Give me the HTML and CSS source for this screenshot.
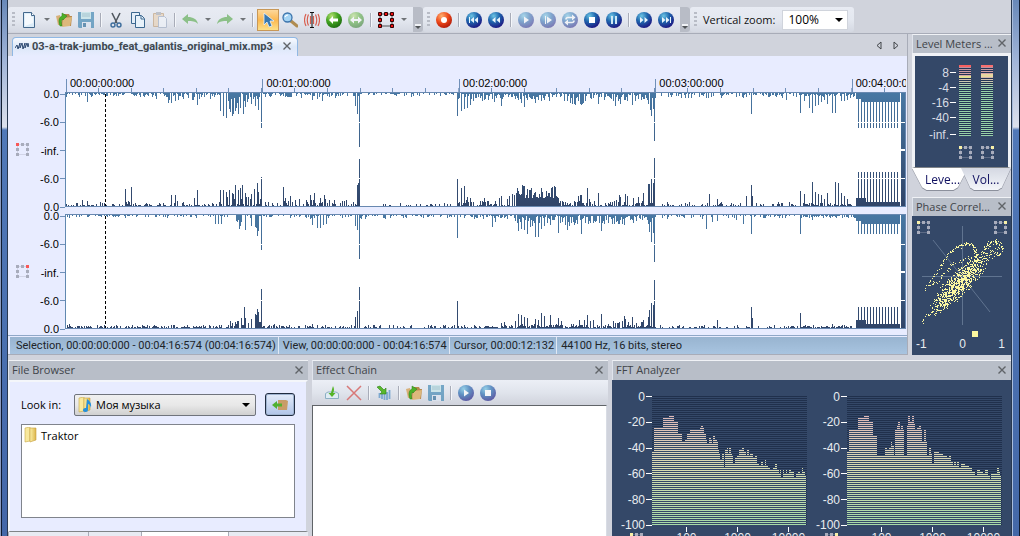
FILE: index.html
```html
<!DOCTYPE html>
<html lang="en">
<head>
    <meta charset="UTF-8">
    <meta name="viewport" content="width=device-width, initial-scale=1.0">
    <title>03-a-trak-jumbo_feat_galantis_original_mix.mp3</title>
    <link rel="stylesheet" href="styles.css">
</head>
<body>
    <svg class="defs" width="0" height="0" aria-hidden="true">
        <defs>
            <radialGradient id="ballBlue" cx="35%" cy="25%" r="80%">
                <stop offset="0" stop-color="#6cc4e4"/>
                <stop offset="0.45" stop-color="#1f68ae"/>
                <stop offset="1" stop-color="#1c1280"/>
            </radialGradient>
            <radialGradient id="ballGreen" cx="35%" cy="25%" r="80%">
                <stop offset="0" stop-color="#b4e070"/>
                <stop offset="0.5" stop-color="#42a321"/>
                <stop offset="1" stop-color="#1c6a10"/>
            </radialGradient>
            <radialGradient id="ballRed" cx="35%" cy="25%" r="80%">
                <stop offset="0" stop-color="#ffb070"/>
                <stop offset="0.5" stop-color="#ee4b1c"/>
                <stop offset="1" stop-color="#b01808"/>
            </radialGradient>
            <linearGradient id="folder" x1="0" x2="1" y1="0" y2="0">
                <stop offset="0" stop-color="#fbf0a8"/>
                <stop offset="1" stop-color="#dcb44a"/>
            </linearGradient>
            <linearGradient id="waveTop" x1="0" x2="0" y1="0" y2="115" gradientUnits="userSpaceOnUse">
                <stop offset="0" stop-color="#4878a4"/>
                <stop offset="1" stop-color="#304468"/>
            </linearGradient>
            <linearGradient id="spectrum" x1="0" x2="0" y1="0" y2="130" gradientUnits="userSpaceOnUse">
                <stop offset="0.1" stop-color="#e0b4b8"/>
                <stop offset="0.35" stop-color="#dcccb8"/>
                <stop offset="0.55" stop-color="#d8dcb0"/>
                <stop offset="1" stop-color="#a8dca8"/>
            </linearGradient>
            <pattern id="rows" width="4" height="2" patternUnits="userSpaceOnUse">
                <rect width="4" height="1" fill="#fff"/>
            </pattern>
            <mask id="rowMask" maskUnits="userSpaceOnUse" x="0" y="0" width="155" height="130">
                <rect width="155" height="130" fill="url(#rows)"/>
            </mask>

            <symbol id="i-new" viewBox="0 0 16 16">
                <path d="M2.500.5h8l3 3v12h-11z" fill="#dcecf8" stroke="#44688c"/>
                <path d="M4 2h6v3h2v6L4 14z" fill="#fff" opacity=".7"/>
                <path d="M10.500.5v3h3" fill="#fff" stroke="#44688c"/>
            </symbol>
            <symbol id="i-open" viewBox="0 0 16 16">
                <path d="M0 4l4-1 1 10H2z" fill="#d8b078"/>
                <path d="M8 2h5l1 2h2l-1 10H4z" fill="#b8884c"/>
                <path d="M7 6l9-1-2 9-8 1z" fill="#dcb87c"/>
                <path d="M4 14C2 9 3 5 6 4V1l5 3-4 4V7c-2 1-2 4-1 7z" fill="#4cb028" stroke="#2c8018" stroke-width=".5"/>
            </symbol>
            <symbol id="i-save" viewBox="0 0 16 16">
                <path d="M0 0h16v16H1l-1-1z" fill="#5090b8"/>
                <path d="M3 0h10v7H3z" fill="#c4e4e8"/>
                <path d="M4 2h8M4 4h8" stroke="#90b8c4"/>
                <path d="M4 10h9v6H4z" fill="#dce4f0"/>
                <path d="M5 11h3v4H5z" fill="#4078a0"/>
            </symbol>
            <symbol id="i-cut" viewBox="0 0 16 16">
                <path d="M4 1l5 10M12 1L7 11" stroke="#505860" stroke-width="1.600" fill="none"/>
                <circle cx="5" cy="13" r="2" fill="none" stroke="#3c6c9c" stroke-width="1.400"/>
                <circle cx="11" cy="13" r="2" fill="none" stroke="#3c6c9c" stroke-width="1.400"/>
            </symbol>
            <symbol id="i-copy" viewBox="0 0 16 16">
                <path d="M1.500.5h8v11h-8z" fill="#e4eef8" stroke="#3c6890"/>
                <path d="M5.500 3.500h6l3 3v9h-9z" fill="#e8f2fa" stroke="#3c6890"/>
                <path d="M11 4v3h3" fill="none" stroke="#3c6890"/>
            </symbol>
            <symbol id="i-paste" viewBox="0 0 16 16">
                <path d="M1.500 1.500h10v13h-10z" fill="#e8d4bc" stroke="#c4a888"/>
                <path d="M4 0h5v3H4z" fill="#b0b4bc"/>
                <path d="M6.500 4.500h6l2 2v9h-8z" fill="#eef2f8" stroke="#a8b4c8"/>
            </symbol>
            <symbol id="i-undo" viewBox="0 0 16 16">
                <path d="M0 7l6-5v3c5 0 9 2 10 7-3-3-6-3-10-3v3z" fill="#8cc088"/>
            </symbol>
            <symbol id="i-redo" viewBox="0 0 16 16">
                <path d="M16 7l-6-5v3C5 5 1 7 0 12c3-3 6-3 10-3v3z" fill="#8cc088"/>
            </symbol>
            <symbol id="i-arrow" viewBox="0 0 16 16">
                <path d="M4 1v12l3-3 2 5 3-1-2-5h4z" fill="#3878b0" stroke="#e8f4fc" stroke-width=".8"/>
            </symbol>
            <symbol id="i-zoom" viewBox="0 0 16 16">
                <path d="M9 9l6 5" stroke="#b08c50" stroke-width="3" stroke-linecap="round"/>
                <circle cx="5.500" cy="5.500" r="4.500" fill="#a4d4f4" stroke="#3c74ac" stroke-width="1.300"/>
                <path d="M3 5q1-2 3-2" stroke="#fff" fill="none" stroke-width="1.200"/>
            </symbol>
            <symbol id="i-scrub" viewBox="0 0 16 16">
                <path d="M2 2Q-1 8 2 14M4.500 2.500Q2 8 4.500 13.500M6.500 4v8M14 2q3 6 0 12M11.500 2.500Q14 8 11.500 13.500M9.500 4v8" stroke="#d86050" fill="none" stroke-width="1.200"/>
                <path d="M6 .5h4M8 1v14M6 15.500h4" stroke="#101010" fill="none"/>
            </symbol>
            <symbol id="i-back" viewBox="0 0 16 16">
                <circle cx="8" cy="8" r="8" fill="url(#ballGreen)"/>
                <path d="M3 8l4-4v2.500h5v3H7V12z" fill="#fff"/>
            </symbol>
            <symbol id="i-both" viewBox="0 0 16 16">
                <circle cx="8" cy="8" r="8" fill="url(#ballGreen)"/>
                <path d="M2 8l4-3.500v2.500h4V4.500L14 8l-4 3.500V9H6v2.500z" fill="#fff"/>
            </symbol>
            <symbol id="i-marquee" viewBox="0 0 16 16">
                <path d="M2 2h12v12H2z" fill="none" stroke="#505050"/>
                <path d="M.5.5h3v3h-3zM6.500.5h3v3h-3zM12.500.5h3v3h-3zM.5 6.500h3v3h-3zM12.500 6.500h3v3h-3zM.5 12.500h3v3h-3zM12.500 12.500h3v3h-3z" fill="#f01010" stroke="#300"/>
            </symbol>
            <symbol id="i-record" viewBox="0 0 16 16">
                <circle cx="8" cy="8" r="8" fill="url(#ballRed)"/>
                <circle cx="8" cy="8" r="3" fill="#fff"/>
            </symbol>
            <symbol id="i-start" viewBox="0 0 16 16">
                <circle cx="8" cy="8" r="8" fill="url(#ballBlue)"/>
                <path d="M3 5h1v6H3zM8 5v6L4.500 8zM12 5v6L8.500 8z" fill="#e8f4fc"/>
            </symbol>
            <symbol id="i-rewind" viewBox="0 0 16 16">
                <circle cx="8" cy="8" r="8" fill="url(#ballBlue)"/>
                <path d="M7.500 5v6L4 8zM12 5v6L8.500 8z" fill="#e8f4fc"/>
            </symbol>
            <symbol id="i-forward" viewBox="0 0 16 16">
                <circle cx="8" cy="8" r="8" fill="url(#ballBlue)"/>
                <path d="M4 5v6l3.500-3zM8.500 5v6L12 8z" fill="#e8f4fc"/>
            </symbol>
            <symbol id="i-end" viewBox="0 0 16 16">
                <circle cx="8" cy="8" r="8" fill="url(#ballBlue)"/>
                <path d="M4 5v6l3.500-3zM8 5v6l3.500-3zM12 5h1v6h-1z" fill="#e8f4fc"/>
            </symbol>
            <symbol id="i-play" viewBox="0 0 16 16">
                <circle cx="8" cy="8" r="8" fill="url(#ballBlue)"/>
                <path d="M6 4.500v7L11 8z" fill="#fff"/>
            </symbol>
            <symbol id="i-playsel" viewBox="0 0 16 16">
                <circle cx="8" cy="8" r="8" fill="url(#ballBlue)"/>
                <path d="M5 4h1v8H5zM7 4.500v7L12 8z" fill="#fff"/>
            </symbol>
            <symbol id="i-loop" viewBox="0 0 16 16">
                <circle cx="8" cy="8" r="8" fill="url(#ballBlue)"/>
                <path d="M4 7.500q0-2 2-2h5M12 8.500q0 2-2 2H5" stroke="#fff" stroke-width="1.600" fill="none"/>
                <path d="M10 2.500l3.500 3-3.500 3zM6 7.500v6l-3.500-3z" fill="#fff"/>
            </symbol>
            <symbol id="i-stop" viewBox="0 0 16 16">
                <circle cx="8" cy="8" r="8" fill="url(#ballBlue)"/>
                <path d="M5 5h6v6H5z" fill="#fff"/>
            </symbol>
            <symbol id="i-pause" viewBox="0 0 16 16">
                <circle cx="8" cy="8" r="8" fill="url(#ballBlue)"/>
                <path d="M5 4h2v8H5zM9 4h2v8H9z" fill="#cfe8f4"/>
            </symbol>
            <symbol id="i-close" viewBox="0 0 8 8">
                <path d="M.5.5l7 7M7.500.5l-7 7" stroke="#606468" stroke-width="1.400"/>
            </symbol>
            <symbol id="i-wave" viewBox="0 0 14 8">
                <path d="M0 6l2-3 1 4 2-6v5l2-5 1 6 2-6v5l2-5 1 4 1-4" fill="none" stroke="#2c4870"/>
            </symbol>
            <symbol id="i-import" viewBox="0 0 16 16">
                <path d="M1.500 8.500L4 7h8l2.500 1.500v5h-13z" fill="#e0ecf4" stroke="#8cb0c4"/>
                <path d="M9 1q2 4 0 7h2.500L8 12 4.500 8H7q1-4 2-7z" fill="#54b428"/>
            </symbol>
            <symbol id="i-delete" viewBox="0 0 16 16">
                <path d="M1 1l14 14M15 1L1 15" stroke="#d87878" stroke-width="1.500"/>
            </symbol>
            <symbol id="i-apply" viewBox="0 0 16 16">
                <path d="M3.500 8v5M6 9v5M8.500 8v7M11 7v8M13.500 5v9" stroke="#7ca8d0" stroke-width="1.800"/>
                <path d="M1 2l3-1 4 4 2-2v6H4l2-2z" fill="#58b82c" stroke="#2c8018" stroke-width=".6"/>
            </symbol>
            <symbol id="i-folder" viewBox="0 0 14 16">
                <path d="M1 1l5-1v14l-5 1z" fill="#f8e89c" stroke="#c8a848" stroke-width=".6"/>
                <path d="M6 1h6v12l-6 2z" fill="url(#folder)" stroke="#c8a040" stroke-width=".6"/>
            </symbol>
            <symbol id="i-note" viewBox="0 0 14 16">
                <path d="M9 2q5 3 4 9-1-4-3-4v6a2.500 2 0 1 1-2-2z" fill="#2490dc"/>
            </symbol>
            <symbol id="i-up" viewBox="0 0 16 12">
                <path d="M6 1h8l2 1-1 9H6z" fill="#c89c68"/>
                <path d="M0 6l5-4v2.500h5v3H5V10z" fill="#50b030"/>
            </symbol>
            <symbol id="i-speakers" viewBox="0 0 13 13">
                <path d="M1.500 1.500h10v10h-10z" fill="none" stroke="currentColor" opacity=".35"/>
                <path d="M0 0h3v3H0zM5 0h3v3H5zM10 0h3v3h-3zM0 5h3v3H0zM10 5h3v3h-3zM0 10h3v3H0zM10 10h3v3h-3z" fill="currentColor"/>
            </symbol>
        </defs>
    </svg>

    <div class="frame"></div>
    <div class="app">
        <div class="menu-strip"></div>

        <div class="toolbars">
            <div class="toolbar">
                <span class="grip"></span>
                <button class="tool" aria-label="New"><svg><use href="#i-new"/></svg></button>
                <button class="caret" aria-label="New options"></button>
                <button class="tool" aria-label="Open"><svg><use href="#i-open"/></svg></button>
                <button class="tool faded" aria-label="Save"><svg><use href="#i-save"/></svg></button>
                <span class="sep"></span>
                <button class="tool" aria-label="Cut"><svg><use href="#i-cut"/></svg></button>
                <button class="tool" aria-label="Copy"><svg><use href="#i-copy"/></svg></button>
                <button class="tool faded" aria-label="Paste"><svg><use href="#i-paste"/></svg></button>
                <span class="sep"></span>
                <button class="tool" aria-label="Undo"><svg><use href="#i-undo"/></svg></button>
                <button class="caret" aria-label="Undo history"></button>
                <button class="tool" aria-label="Redo"><svg><use href="#i-redo"/></svg></button>
                <button class="caret" aria-label="Redo history"></button>
                <span class="sep"></span>
                <button class="tool active" aria-label="Select"><svg><use href="#i-arrow"/></svg></button>
                <button class="tool" aria-label="Zoom"><svg><use href="#i-zoom"/></svg></button>
                <button class="tool" aria-label="Scrub"><svg><use href="#i-scrub"/></svg></button>
                <button class="tool" aria-label="Back"><svg><use href="#i-back"/></svg></button>
                <button class="tool dim" aria-label="Expand"><svg><use href="#i-both"/></svg></button>
                <span class="sep"></span>
                <button class="tool" aria-label="Channels"><svg><use href="#i-marquee"/></svg></button>
                <button class="caret" aria-label="Channel options"></button>
                <button class="more" aria-label="More tools"></button>
            </div>
            <div class="toolbar">
                <span class="grip"></span>
                <button class="tool" aria-label="Record"><svg><use href="#i-record"/></svg></button>
                <span class="sep"></span>
                <button class="tool" aria-label="To start"><svg><use href="#i-start"/></svg></button>
                <button class="tool" aria-label="Rewind"><svg><use href="#i-rewind"/></svg></button>
                <span class="sep"></span>
                <button class="tool dim" aria-label="Play"><svg><use href="#i-play"/></svg></button>
                <button class="tool dim" aria-label="Play selection"><svg><use href="#i-playsel"/></svg></button>
                <button class="tool dim" aria-label="Loop"><svg><use href="#i-loop"/></svg></button>
                <button class="tool" aria-label="Stop"><svg><use href="#i-stop"/></svg></button>
                <button class="tool" aria-label="Pause"><svg><use href="#i-pause"/></svg></button>
                <span class="sep"></span>
                <button class="tool" aria-label="Forward"><svg><use href="#i-forward"/></svg></button>
                <button class="tool" aria-label="To end"><svg><use href="#i-end"/></svg></button>
                <button class="more" aria-label="More playback"></button>
            </div>
            <div class="toolbar zoom-bar">
                <span class="grip"></span>
                <label for="vzoom">Vertical zoom:</label>
                <div class="select-wrap">
                    <select id="vzoom"><option>100%</option></select>
                </div>
            </div>
        </div>

        <div class="work">
            <main class="document">
                <div class="tab-strip">
                    <div class="doc-tab">
                        <svg class="wave-icon"><use href="#i-wave"/></svg>
                        <span>03-a-trak-jumbo_feat_galantis_original_mix.mp3</span>
                        <button class="close" aria-label="Close file"><svg><use href="#i-close"/></svg></button>
                    </div>
                    <div class="tab-nav">
                        <button aria-label="Previous tab"><svg viewBox="0 0 6 9"><path d="M5 1v7L1 4.500z"/></svg></button>
                        <button aria-label="Next tab"><svg viewBox="0 0 6 9"><path d="M1 1v7l4-3.500z"/></svg></button>
                    </div>
                </div>
                <div class="editor">
                    <div class="ruler" id="ruler"></div>
                    <div class="channel">
                        <svg class="speakers"><use href="#i-speakers"/><rect class="hot" width="3" height="3"/></svg>
                        <div class="scale"><span>0.0</span><span>-6.0</span><span>-inf.</span><span>-6.0</span><span>0.0</span></div>
                        <svg class="wave" id="wave1" viewBox="66 0 840 115" preserveAspectRatio="none"></svg>
                    </div>
                    <div class="channel">
                        <svg class="speakers"><use href="#i-speakers"/><rect class="hot" x="10" width="3" height="3"/></svg>
                        <div class="scale"><span>0.0</span><span>-6.0</span><span>-inf.</span><span>-6.0</span><span>0.0</span></div>
                        <svg class="wave" id="wave2" viewBox="66 0 840 115" preserveAspectRatio="none"></svg>
                    </div>
                </div>
                <div class="status">
                    <span>Selection, 00:00:00:000 - 00:04:16:574 (00:04:16:574)</span>
                    <span>View, 00:00:00:000 - 00:04:16:574</span>
                    <span>Cursor, 00:00:12:132</span>
                    <span>44100 Hz, 16 bits, stereo</span>
                </div>
            </main>

            <aside class="side">
                <section class="panel">
                    <h2><span>Level Meters ...</span><button class="close" aria-label="Close"><svg><use href="#i-close"/></svg></button></h2>
                    <div class="meters">
                        <div class="db"><span>8</span><span>-4</span><span>-16</span><span>-40</span><span>-inf.</span></div>
                        <div class="meter"><div class="bar left"></div><svg class="speakers"><use href="#i-speakers"/><rect class="lit" width="3" height="3"/></svg></div>
                        <div class="meter"><div class="bar right"></div><svg class="speakers"><use href="#i-speakers"/><rect class="lit" x="10" width="3" height="3"/></svg></div>
                    </div>
                    <div class="meter-tabs">
                        <button class="on">Leve...</button>
                        <button>Vol...</button>
                    </div>
                </section>
                <section class="panel">
                    <h2><span>Phase Correl...</span><button class="close" aria-label="Close"><svg><use href="#i-close"/></svg></button></h2>
                    <div class="phase">
                        <svg id="phase" viewBox="912 216 99 115">
                            <path class="axis" d="M962.500 226v99M922 276.500h80M933 240l57 72"/>
                            <svg class="speakers" x="917" y="221" width="13" height="13"><use href="#i-speakers"/><rect class="lit" width="3" height="3"/></svg>
                            <svg class="speakers" x="994" y="221" width="13" height="13"><use href="#i-speakers"/><rect class="lit" x="10" width="3" height="3"/></svg>
                        </svg>
                        <div class="phase-mark"></div>
                        <div class="phase-scale"><span>-1</span><span>0</span><span>1</span></div>
                    </div>
                </section>
            </aside>
        </div>

        <div class="dock">
            <section class="panel browser">
                <h2><span>File Browser</span><button class="close" aria-label="Close"><svg><use href="#i-close"/></svg></button></h2>
                <div class="browser-body">
                    <div class="look-in">
                        <label for="lookin">Look in:</label>
                        <div class="folder-select">
                            <svg><use href="#i-folder"/><use href="#i-note"/></svg>
                            <select id="lookin"><option>Моя музыка</option></select>
                        </div>
                        <button class="up" aria-label="Up one level"><svg><use href="#i-up"/></svg></button>
                    </div>
                    <ul class="files">
                        <li><svg><use href="#i-folder"/></svg>Traktor</li>
                    </ul>
                </div>
                <div class="dock-tabs"><span></span><span></span><span class="on"></span><span></span></div>
            </section>
            <section class="panel effects">
                <h2><span>Effect Chain</span><button class="close" aria-label="Close"><svg><use href="#i-close"/></svg></button></h2>
                <div class="effect-tools">
                    <button class="tool" aria-label="Add effect"><svg><use href="#i-import"/></svg></button>
                    <button class="tool" aria-label="Remove effect"><svg><use href="#i-delete"/></svg></button>
                    <span class="sep"></span>
                    <button class="tool" aria-label="Apply"><svg><use href="#i-apply"/></svg></button>
                    <span class="sep"></span>
                    <button class="tool" aria-label="Open chain"><svg><use href="#i-open"/></svg></button>
                    <button class="tool faded" aria-label="Save chain"><svg><use href="#i-save"/></svg></button>
                    <span class="sep"></span>
                    <button class="tool dim" aria-label="Preview"><svg><use href="#i-play"/></svg></button>
                    <button class="tool dim" aria-label="Stop preview"><svg><use href="#i-stop"/></svg></button>
                </div>
                <div class="effect-list"></div>
            </section>
            <section class="panel fft">
                <h2><span>FFT Analyzer</span><button class="close" aria-label="Close"><svg><use href="#i-close"/></svg></button></h2>
                <div class="graphs">
                    <div class="graph">
                        <div class="fft-db"><span>0</span><span>-20</span><span>-40</span><span>-60</span><span>-80</span><span>-100</span></div>
                        <svg class="plot" id="fft1" viewBox="0 0 155 130" preserveAspectRatio="none"></svg>
                        <svg class="speakers"><use href="#i-speakers"/><rect class="lit" width="3" height="3"/></svg>
                        <div class="hz"><span>100</span><span>1000</span><span>10000</span></div>
                    </div>
                    <div class="graph">
                        <div class="fft-db"><span>0</span><span>-20</span><span>-40</span><span>-60</span><span>-80</span><span>-100</span></div>
                        <svg class="plot" id="fft2" viewBox="0 0 155 130" preserveAspectRatio="none"></svg>
                        <svg class="speakers"><use href="#i-speakers"/><rect class="lit" x="10" width="3" height="3"/></svg>
                        <div class="hz"><span>100</span><span>1000</span><span>10000</span></div>
                    </div>
                </div>
            </section>
        </div>
    </div>
    <div class="frame right"></div>
    <script src="script.js"></script>
</body>
</html>
```
FILE: styles.css
```css
* {
    box-sizing: border-box;
}
body {
    margin: 0;
    display: flex;
    height: 100vh;
    overflow: hidden;
    background: #d0d3dc;
    font-family: "Open Sans", "Noto Sans", sans-serif;
    font-size: 11px;
    color: #202428;
}
button {
    margin: 0;
    padding: 0;
    border: none;
    background: none;
    font: inherit;
    color: inherit;
}
select {
    appearance: none;
    border: none;
    background: none;
    margin: 0;
    font: inherit;
    color: #000;
}
.defs {
    position: absolute;
}

/* Window frame */
.frame {
    flex: 0 0 8px;
    border-left: 1px solid #8c9cc0;
    border-right: 1px solid #283850;
    background: linear-gradient(#6888b8 0, #a0b4d8 60px, #dce0ec 127px, #5078b8 130px, #4468a8 100%);
    box-shadow: inset 1px 0 #101c30;
}
.frame.right {
    flex-basis: 9px;
    border-left: 1px solid #283850;
    border-right: 1px solid #101c30;
    box-shadow: inset 1px 0 #a8bcdc;
}
.app {
    flex: 1;
    min-width: 0;
    display: flex;
    flex-direction: column;
}
.menu-strip {
    flex: 0 0 7px;
}

/* Toolbars */
.toolbars {
    display: flex;
    flex: 0 0 27px;
    padding-bottom: 1px;
    border-bottom: 1px solid #a8acb8;
}
.toolbar {
    display: flex;
    align-items: center;
    height: 25px;
    padding-left: 4px;
    border-radius: 3px;
    background: linear-gradient(#e8ebf3, #e4e8f0 50%, #d4d8e2);
}
.grip {
    width: 3px;
    height: 15px;
    margin-right: 3px;
    background: repeating-linear-gradient(#b8bcc6 0, #b8bcc6 2px, transparent 2px, transparent 4px);
}
.tool {
    display: flex;
    align-items: center;
    justify-content: center;
    width: 22px;
    height: 22px;
    flex: none;
}
.tool svg {
    width: 16px;
    height: 16px;
}
.tool.active {
    border: 1px solid #c89858;
    background: linear-gradient(#fcd89c, #fcb850 50%, #fce088);
}
.faded svg {
    opacity: .75;
}
.dim svg {
    opacity: .5;
}
.effect-tools .dim svg {
    opacity: .65;
}
.caret {
    width: 13px;
    height: 22px;
    display: flex;
    align-items: center;
    justify-content: center;
}
.caret::before {
    content: "";
    border: 3px solid transparent;
    border-top-color: #707478;
    border-bottom: none;
}
.sep {
    flex: none;
    width: 2px;
    height: 14px;
    margin: 0 3px;
    background: linear-gradient(to right, #a8acb8 1px, #f4f6fa 1px);
}
.more {
    display: flex;
    align-items: flex-end;
    justify-content: center;
    width: 10px;
    height: 25px;
    margin-left: 3px;
    padding-bottom: 3px;
    border-radius: 0 3px 3px 0;
    background: #b8bcc6;
}
.more::before {
    content: "";
    border: 3px solid transparent;
    border-top-color: #505458;
    border-bottom: none;
    box-shadow: 0 -2px #f0f2f6;
}
.zoom-bar {
    padding-right: 6px;
}
.zoom-bar label {
    margin-left: 3px;
    margin-right: 7px;
    color: #101010;
}
.select-wrap {
    position: relative;
}
.select-wrap select {
    display: block;
    width: 66px;
    height: 20px;
    padding: 0 5px;
    border: 1px solid #d0d4dc;
    background: #fff;
    font-size: 12px;
}
.select-wrap::after,
.folder-select::after {
    content: "";
    position: absolute;
    right: 5px;
    top: 8px;
    border: 4px solid transparent;
    border-top-color: #000;
    border-bottom: none;
}

/* Document */
.work {
    display: flex;
    flex: none;
    gap: 4px;
}
.document {
    flex: 1;
    min-width: 0;
    border-right: 1px solid #a8acb8;
    border-bottom: 1px solid #a8acb8;
    background: #e8ecff;
}
.tab-strip {
    display: flex;
    justify-content: space-between;
    align-items: flex-end;
    height: 22px;
    padding: 0 8px 0 4px;
    background: #d0d3dc;
}
.doc-tab {
    display: flex;
    align-items: center;
    height: 19px;
    padding: 0 6px 2px 2px;
    border: 1px solid #90b8e4;
    border-bottom: none;
    border-radius: 4px 4px 0 0;
    background: linear-gradient(#f8faff, #dce8f8 50%, #e8ecff);
    font-family: Roboto, "Open Sans", sans-serif;
    font-weight: bold;
    color: #404850;
}
.wave-icon {
    width: 14px;
    height: 8px;
    margin-right: 3px;
}
.close {
    display: flex;
    align-items: center;
}
.close svg {
    width: 8px;
    height: 8px;
}
.doc-tab .close {
    margin-left: 10px;
}
.tab-nav {
    display: flex;
    gap: 11px;
    align-self: center;
}
.tab-nav svg {
    display: block;
    width: 6px;
    height: 9px;
    fill: none;
    stroke: #404448;
}
.editor {
    padding: 0 1px 6px 0;
    border-bottom: 1px solid #90a8c8;
    font-family: "Liberation Sans", Arial, sans-serif;
    color: #000;
}
.ruler {
    display: flex;
    height: 36px;
    margin-left: 58px;
    overflow: hidden;
    align-items: flex-end;
}
.minute {
    flex: none;
    height: 13px;
    padding-left: 3px;
    line-height: 8px;
    border-left: 1px solid #7090b8;
    background: repeating-linear-gradient(to right, transparent 0, transparent calc(100% / 6 - 1px), #7090b8 calc(100% / 6 - 1px), #7090b8 calc(100% / 6)) bottom / 100% 4px no-repeat;
}
.channel {
    display: flex;
    align-items: center;
}
.channel + .channel {
    margin-top: 7px;
}
.speakers {
    flex: none;
    width: 13px;
    height: 13px;
    color: #a8acbc;
}
.hot {
    fill: #f85858;
}
.lit {
    fill: #f8f0a8;
}
.channel .speakers {
    margin: 0 0 0 8px;
}
.scale {
    display: flex;
    flex-direction: column;
    justify-content: space-between;
    width: 36px;
    height: 121px;
    margin: -2px 0 -4px;
}
.scale span {
    display: flex;
    justify-content: flex-end;
    align-items: center;
    line-height: 8px;
}
.scale span::after {
    content: "";
    width: 5px;
    height: 1px;
    margin-left: 1px;
    background: #7090b8;
}
.wave {
    flex: 1;
    min-width: 0;
    height: 115px;
    border-left: 1px solid #6088b0;
    background: #fff;
}
.wave .cursor {
    stroke: #000;
    stroke-dasharray: 3 2;
}
.wave .grid {
    stroke: #fff;
}
.wave .edge {
    stroke: #6888b0;
}
.status {
    display: flex;
    height: 17px;
    margin: 1px 0 0 2px;
    line-height: 17px;
    background: linear-gradient(#98b4d0, #a8c4e0);
    font-family: Roboto, "Open Sans", sans-serif;
}
.status span {
    padding: 0 2px 0 4px;
    border-right: 1px solid #e0e8f4;
    white-space: nowrap;
}
.status span:first-child {
    padding-left: 6px;
}
.status span:last-child {
    border: none;
}

/* Panels */
.side {
    flex: 0 0 99px;
    display: flex;
    flex-direction: column;
    justify-content: space-between;
}
.panel {
    min-width: 0;
}
.panel h2 {
    display: flex;
    justify-content: space-between;
    align-items: center;
    height: 19px;
    margin: 0;
    padding: 0 5px 2px 3px;
    border-top: 1px solid #f0f2f6;
    border-left: 1px solid #e0e4ec;
    background: #b8bec8;
    font-size: 11px;
    font-weight: normal;
    color: #404448;
    white-space: nowrap;
}
.meters {
    display: flex;
    height: 115px;
    padding: 9px 14px 0 6px;
    border: 3px solid #f0f2f6;
    border-bottom: 1px solid #808488;
    background: #344868;
    font-family: "Liberation Sans", Arial, sans-serif;
    font-size: 12px;
    color: #d8dce4;
}
.db {
    flex: 1;
    margin-right: 3px;
}
.db span,
.fft-db span {
    display: flex;
    align-items: center;
    justify-content: flex-end;
    height: 15px;
}
.db span:last-child {
    margin-top: 2px;
}
.db span::after,
.fft-db span::after {
    content: "";
    width: 6px;
    height: 1px;
    margin-left: 1px;
    background: #fff;
}
.meter {
    width: 13px;
}
.meter + .meter {
    margin-left: 9px;
}
.bar {
    width: 12px;
    height: 71px;
    margin-bottom: 10px;
    background:
        linear-gradient(#f86060 0, #f86060 2px, transparent 2px, transparent 11px, #e0e090 11px, #e0e090 13px, transparent 13px),
        repeating-linear-gradient(transparent 0, transparent 1px, #243454 1px, #243454 2px),
        linear-gradient(#b88898, #d8a8a8 11px, #d0c8b0 16px, #98d0a8 22px, #98d0a8);
}
.bar.right {
    background:
        linear-gradient(#f87070 0, #f87070 2px, transparent 2px, transparent 9px, #e8d8a0 9px, #e8d8a0 12px, transparent 12px),
        repeating-linear-gradient(transparent 0, transparent 1px, #243454 1px, #243454 2px),
        linear-gradient(#b88898, #d8a8a8 9px, #d0c8b0 16px, #98d0a8 22px, #98d0a8);
}
.meter-tabs {
    display: flex;
    height: 23px;
    font-size: 12px;
    color: #101060;
    filter: drop-shadow(0 1px 0 #8c909c);
}
.meter-tabs button {
    width: 50px;
    margin-bottom: 1px;
    background: linear-gradient(#d4d8e2, #f4f6fa);
    clip-path: polygon(0 0, 100% 0, 82% 88%, 74% 100%, 26% 100%, 18% 88%);
}
.meter-tabs .on {
    width: 56px;
    padding-left: 5px;
    margin-right: -7px;
    background: #fff;
}
.phase {
    height: 139px;
    background: #344868;
    font-family: "Liberation Sans", Arial, sans-serif;
    font-size: 12px;
    color: #e8ecf0;
}
.phase > svg {
    display: block;
    width: 100%;
    height: 115px;
}
.axis {
    fill: none;
    stroke: #607490;
}
.dots {
    fill: #fcf8a0;
}
.phase-mark {
    width: 6px;
    height: 6px;
    margin-left: 60px;
    background: #fcf8a0;
}
.phase-scale {
    display: flex;
    justify-content: space-between;
    padding: 0 6px 0 4px;
    line-height: 14px;
}

/* Bottom dock */
.dock {
    flex: 1;
    min-height: 0;
    display: grid;
    grid-template-columns: 300fr 296fr 399fr;
    gap: 4px;
    margin-top: 5px;
}
.dock .panel {
    display: flex;
    flex-direction: column;
    min-height: 0;
    overflow: hidden;
}
.dock .panel h2 {
    flex: none;
    height: 20px;
}
.browser-body {
    flex: none;
    height: 152px;
    padding: 11px;
    border: 2px solid #f4f6fa;
    border-bottom: 1px solid #808488;
    border-right-color: #d0d4dc;
    background: #e8ecff;
    color: #000;
}
.look-in {
    display: flex;
    align-items: center;
    margin-bottom: 8px;
}
.look-in label {
    width: 53px;
}
.folder-select {
    position: relative;
    flex: 1;
    display: flex;
    align-items: center;
    height: 22px;
    padding-left: 3px;
    border: 1px solid #70747c;
    border-radius: 2px;
    background: linear-gradient(#f0f0f0, #e8e8e8 50%, #d0d0d0);
}
.folder-select svg {
    flex: none;
    width: 14px;
    height: 16px;
    margin-right: 4px;
}
.folder-select select {
    flex: 1;
    min-width: 0;
    padding: 0;
}
.up {
    display: flex;
    align-items: center;
    justify-content: center;
    width: 30px;
    height: 23px;
    margin-left: 9px;
    border: 1px solid #202c40;
    border-radius: 3px;
    background: linear-gradient(#e4ecfa, #b0c4e8);
    box-shadow: inset 0 0 0 1px #a0b4d0;
}
.up svg {
    width: 16px;
    height: 12px;
}
.files {
    height: 94px;
    margin: 0;
    padding: 1px 2px;
    border: 1px solid #80848c;
    background: #fff;
    list-style: none;
}
.files li {
    display: flex;
    align-items: center;
    height: 18px;
}
.files svg {
    width: 14px;
    height: 16px;
    margin-right: 3px;
}
.dock-tabs {
    display: flex;
    flex: 1;
    background: #d8dce4;
}
.dock-tabs span {
    flex: 80;
    border-left: 1px solid #a8acb8;
    background: #e8ebf3;
}
.dock-tabs span:nth-child(2) {
    flex: 52;
}
.dock-tabs .on {
    flex: 86;
    background: #fff;
}
.effect-tools {
    display: flex;
    flex: none;
    align-items: center;
    height: 25px;
    padding-left: 9px;
    background: linear-gradient(#eceff6, #e0e4ec 50%, #d0d3dc);
}
.effect-list {
    flex: 1;
    margin-right: 1px;
    border: 1px solid #606468;
    border-right-color: #d8dce4;
    border-bottom: none;
    background: #fff;
}
.fft {
    background: #344868;
}
.graphs {
    display: grid;
    grid-template-columns: minmax(0, 1fr) minmax(0, 1fr);
    gap: 6px;
    padding: 9px 9px 0 6px;
    font-family: "Liberation Sans", Arial, sans-serif;
    font-size: 12px;
    color: #e8ecf0;
}
.graph {
    display: grid;
    grid-template-columns: 34px minmax(0, 1fr);
}
.fft-db {
    display: flex;
    flex-direction: column;
    justify-content: space-between;
    height: 144px;
}
.plot {
    width: 100%;
    height: 130px;
    margin-top: 7px;
    background: repeating-linear-gradient(#20304c 0, #20304c 1px, #344868 1px, #344868 2px);
}
.graph .speakers {
    justify-self: end;
    margin: 0 9px 0 0;
}
.hz {
    display: flex;
    margin: -6px 0 0 9px;
}
.hz span {
    display: flex;
    flex: 0 0 51px;
    flex-direction: column;
    align-items: center;
    line-height: 12px;
}
.hz span::before {
    content: "";
    width: 1px;
    height: 5px;
    background: #fff;
}
```
FILE: script.js
```js
const NS = 'http://www.w3.org/2000/svg';
const DURATION = 256.574;

function make(parent, name, attrs) {
    const el = document.createElementNS(NS, name);
    for (const key in attrs) {
        el.setAttribute(key, attrs[key]);
    }
    parent.appendChild(el);
    return el;
}

// "x:h x:h" -> [[x, h], ...]
function parse(text) {
    return text.trim().split(/\s+/).map(pair => pair.split(':').map(Number));
}

let seed = 7;
function random() {
    seed = (seed * 16807) % 2147483647;
    return seed / 2147483647;
}

// Time ruler, one cell per minute
const ruler = document.getElementById('ruler');
for (let m = 0; m < 5; m++) {
    const cell = document.createElement('span');
    cell.className = 'minute';
    cell.textContent = '00:0' + m + ':00:000';
    cell.style.width = (60 / DURATION * 100) + '%';
    ruler.appendChild(cell);
}

// noise: [from, to, density, max height]
const channels = [
    {
        id: 'wave1',
        top: '87:10 156:7 168:11 171:11 175:9 178:8 183:7 188:6 193:8 197:13 220:19 223:24 226:26 229:17 230:20 232:24 233:22 235:19 236:16 238:22 240:16 243:22 245:15 251:12 255:14 258:18 261:36 312:8 317:7 322:9 355:14 357:22 359:55 457:24 461:19 464:17 467:16 470:13 473:9 476:6 482:9 484:8 488:8 492:7 494:10 496:6 501:14 508:5 512:5 515:7 518:8 521:11 524:15 527:8 530:6 535:11 538:8 541:9 544:8 548:5 564:9 570:11 572:12 574:12 575:13 578:9 580:12 581:13 582:12 583:11 585:9 598:12 605:5 615:14 618:9 620:12 624:8 627:9 632:13 635:9 643:7 648:12 650:18 651:24 653:17 654:49 706:6 708:6 711:5 736:5 743:5 746:5 751:22 770:4 776:5 786:8 800:21 804:9 809:16 812:21 815:14 818:13 821:10 824:8 827:12 832:21 835:21 841:9 844:9 847:8 850:6',
        bottom: '76:4 82:7 87:6 125:18 128:6 131:20 146:4 171:12 175:12 177:6 183:5 194:9 197:17 220:17 223:17 226:15 229:17 232:14 233:13 235:22 238:17 240:19 242:22 245:14 251:13 254:18 257:24 258:15 261:30 283:20 285:9 290:11 310:12 314:14 320:9 324:12 329:7 357:22 358:24 359:48 457:28 461:19 464:21 467:10 470:9 484:9 487:6 499:9 501:11 507:8 509:11 512:13 514:12 578:11 580:12 581:12 587:19 589:8 598:14 619:12 620:10 625:13 627:11 633:9 638:10 643:14 648:23 649:23 651:28 653:24 654:49 709:13 717:8 746:11 751:22 752:11 800:16 804:13 812:25 815:15 818:13 821:12 824:8 827:14 835:25 838:24 841:14 844:11 847:8',
        topNoise: [[66, 165, .6, 3], [165, 220, .7, 6], [226, 248, .9, 12], [248, 262, .7, 6], [262, 340, .7, 4], [340, 457, .5, 3], [457, 548, .9, 6], [548, 655, .85, 7], [655, 800, .5, 4], [800, 860, .9, 3]],
        bottomNoise: [[66, 220, .5, 3], [220, 262, .7, 9], [262, 357, .6, 6], [380, 457, .3, 2], [457, 510, .7, 5], [516, 559, 1, 20], [559, 655, .6, 5], [655, 800, .4, 3], [800, 852, .7, 2]],
        solid: 10, comb: 36, combBottom: 35
    },
    {
        id: 'wave2',
        top: '69:4 215:10 218:10 221:10 239:15 240:12 241:8 245:16 251:12 255:13 256:14 257:22 258:17 261:36 312:11 317:14 320:14 323:11 326:10 355:12 357:16 359:45 457:24 492:13 495:8 515:7 518:17 521:15 524:16 527:20 530:13 532:12 535:23 538:23 541:15 544:12 547:9 550:11 558:19 560:9 562:8 565:11 567:16 569:12 571:9 574:11 577:10 581:20 585:9 588:10 594:5 599:9 601:17 604:10 606:6 608:8 612:9 618:10 624:11 632:6 633:9 648:10 649:18 651:28 653:19 654:48 706:15 712:8 717:7 736:6 743:10 751:20 800:20 809:4 812:6 832:3',
        bottom: '69:5 232:6 235:7 238:8 241:11 244:22 245:11 251:10 255:15 256:14 257:20 258:17 261:40 274:5 312:5 355:12 357:18 359:42 457:28 501:6 504:7 515:8 518:15 521:14 524:12 527:11 535:10 538:9 541:16 544:13 550:14 558:11 561:8 571:5 579:9 584:9 587:14 590:8 593:9 601:15 613:8 615:6 618:6 622:8 624:13 625:10 632:12 636:6 641:7 643:9 648:12 649:19 651:26 653:24 654:49 717:9 751:22 752:11 774:4 800:16 832:5',
        topNoise: [[66, 230, .4, 2], [236, 248, .8, 6], [250, 262, .4, 3], [262, 310, .4, 2], [310, 457, .4, 3], [457, 515, .5, 3], [515, 655, .9, 8], [655, 800, .4, 3], [800, 860, .8, 2]],
        bottomNoise: [[66, 230, .6, 2], [230, 262, .5, 6], [262, 457, .4, 2], [457, 520, .6, 2], [520, 612, .8, 3], [612, 655, .9, 6], [655, 800, .4, 2], [800, 852, .7, 2]],
        solid: 10, comb: 20, combBottom: 22
    }
];

function bars(list, fromTop) {
    return list.map(([x, h]) => 'M' + x + (fromTop ? ' 0v' + h : ' 115v-' + h) + 'h1v' + (fromTop ? -h : h) + 'z').join('');
}

function noise(ranges) {
    const list = [];
    for (const [from, to, density, max] of ranges) {
        for (let x = from; x < to; x++) {
            if (random() < density) {
                const r = random();
                list.push([x, max > 15 ? Math.round(max * (.4 + .7 * r)) : 2 + Math.round(max * r * r)]);
            }
        }
    }
    return list;
}

for (const ch of channels) {
    const svg = document.getElementById(ch.id);
    const top = parse(ch.top).concat(noise(ch.topNoise));
    const bottom = parse(ch.bottom).concat(noise(ch.bottomNoise));
    for (let x = 856; x < 900; x++) {
        top.push([x, x < 862 ? 7 : ch.solid]);
        bottom.push([x, x < 866 ? 9 : 5]);
    }
    for (let x = 858; x < 899; x += 3) {
        top.push([x, ch.comb]);
        bottom.push([x, ch.combBottom]);
    }
    for (let x = 901; x < 905; x++) {
        top.push([x, 58]);
        bottom.push([x, 58]);
    }
    make(svg, 'path', { d: bars(top, true) + bars(bottom, false), fill: 'url(#waveTop)' });
    make(svg, 'path', { class: 'grid', d: 'M66 30.500h840M66 58.500h840M66 86.500h840' });
    make(svg, 'path', { class: 'edge', d: 'M66 .5h840M66 114.500h840M905.500 0v115' });
    make(svg, 'path', { class: 'cursor', d: 'M105.500 2v112' });
}

// Spectrum: "x:y" steps, y measured down from 0 dB
const spectra = {
    fft1: '0:55 2:31 11:21 17:19 22:25 26:37 30:45 33:43 35:37 38:34 40:33 42:34 46:33 48:31 49:29 51:31 52:37 54:43 55:47 57:41 59:43 60:47 61:39 63:43 65:45 66:53 67:58 68:63 70:58 72:71 73:54 75:51 76:58 77:51 79:57 80:59 81:67 83:61 85:59 87:53 90:51 92:55 94:59 95:53 97:59 98:57 101:61 103:59 105:67 107:69 109:65 111:69 113:63 114:69 116:71 118:73 121:71 123:67 125:73 127:77 128:73 129:81 131:73 132:77 134:73 135:77 137:73 139:75 142:81 144:77 146:75 148:77 150:71 151:75 153:79',
    fft2: '0:55 2:33 11:21 17:19 22:25 26:39 30:59 38:51 40:53 42:51 44:45 45:50 47:59 48:33 50:29 51:25 53:33 54:29 56:33 57:59 60:29 61:19 63:25 65:19 67:27 68:33 70:31 72:29 74:33 75:45 77:33 79:45 80:59 82:51 84:57 85:67 87:55 92:57 96:59 100:61 102:59 104:65 106:69 107:65 109:69 110:65 112:71 114:67 118:69 122:71 125:75 128:79 130:73 133:75 136:77 138:73 141:79 143:83 144:77 148:77 150:71 152:75 153:79'
};
for (const id in spectra) {
    let d = 'M0 130';
    for (const [x, y] of parse(spectra[id])) {
        d += 'H' + x + 'V' + y;
    }
    d += 'H154V130z';
    make(document.getElementById(id), 'path', { d: d, fill: 'url(#spectrum)', mask: 'url(#rowMask)' });
}

// Phase scope cloud
let dots = '';
function dot(x, y) {
    dots += 'M' + Math.round(x) + ' ' + Math.round(y) + 'h1v1h-1z';
}
for (let i = 0; i < 850; i++) {
    const t = .15 * random() + .85 * (random() + random() + random()) / 3 + (random() - .5) * .4;
    const c = Math.max(0, Math.min(1, t));
    const spread = (random() + random() - 1) * (2 + 11 * Math.sin(Math.PI * Math.min(.8, c)));
    dot(922 + c * 75 + spread * .7, 322 - c * 79 + spread * .7);
}
// stray loops above the diagonal, "x:y" vertices
const loops = [
    ['924:287 932:276 940:262 948:251 956:246 963:242 970:243 974:248 974:256 969:268', 110, 3],
    ['926:284 936:280 944:270 952:262 962:258 970:254', 40, 3],
    ['980:252 985:241 995:239 998:248 990:254', 70, 5]
];
for (const [text, count, jitter] of loops) {
    const points = parse(text);
    for (let i = 0; i < count; i++) {
        const p = i / count * (points.length - 1);
        const k = Math.floor(p);
        const f = p - k;
        dot(points[k][0] * (1 - f) + points[k + 1][0] * f + random() * jitter,
            points[k][1] * (1 - f) + points[k + 1][1] * f + random() * jitter);
    }
}
make(document.getElementById('phase'), 'path', { class: 'dots', d: dots });
```
